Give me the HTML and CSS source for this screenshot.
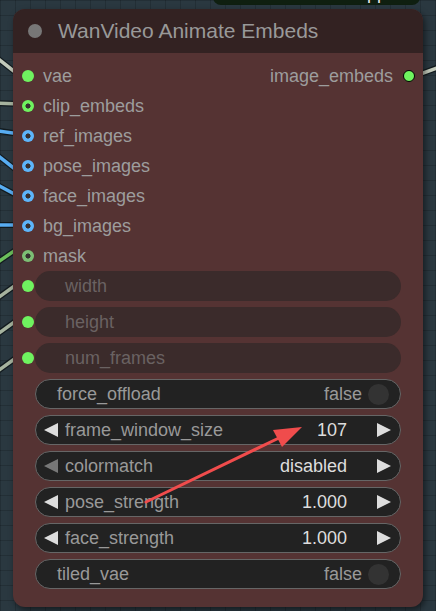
FILE: index.html
```html
<!DOCTYPE html>
<html>
<head>
<meta charset="utf-8">
<link rel="stylesheet" href="styles.css">
</head>
<body>
<div class="canvas">
  <svg class="wires" width="436" height="611" viewBox="0 0 436 611">
    <g class="wire-shadow">
      <path d="M-8 54 L20 76"/>
      <path d="M-8 103 L20 104"/>
      <path d="M-8 130 L20 134"/>
      <path d="M-8 151 L20 173"/>
      <path d="M-8 182 L20 197"/>
      <path d="M-8 225 L20 225"/>
      <path d="M-8 266 L20 247"/>
      <path d="M-8 302 L20 282"/>
      <path d="M-8 338 L20 318"/>
      <path d="M-8 375 L20 355"/>
      <path d="M415 76 L445 65"/>
    </g>
    <path class="wire w-light" d="M-8 54 L20 76"/>
    <path class="wire w-sage" d="M-8 103 L20 104"/>
    <path class="wire w-blue" d="M-8 130 L20 134"/>
    <path class="wire w-blue" d="M-8 151 L20 173"/>
    <path class="wire w-blue" d="M-8 182 L20 197"/>
    <path class="wire w-blue" d="M-8 225 L20 225"/>
    <path class="wire w-green" d="M-8 266 L20 247"/>
    <path class="wire w-sage" d="M-8 302 L20 282"/>
    <path class="wire w-sage" d="M-8 338 L20 318"/>
    <path class="wire w-sage" d="M-8 375 L20 355"/>
    <path class="wire w-light" d="M415 76 L445 65"/>
  </svg>

  <div class="topnode"><span class="topnode-text">App</span></div>

  <div class="node">
    <div class="title">
      <span class="collapse"></span>
      <span class="title-text">WanVideo Animate Embeds</span>
    </div>
    <div class="slots">
      <div class="slot-row">
        <div class="slot in"><span class="dot green"></span>vae</div>
        <div class="slot out">image_embeds<span class="dot green outdot"></span></div>
      </div>
      <div class="slot-row">
        <div class="slot in"><span class="dot ring-green"></span>clip_embeds</div>
      </div>
      <div class="slot-row">
        <div class="slot in"><span class="dot ring-blue"></span>ref_images</div>
      </div>
      <div class="slot-row">
        <div class="slot in"><span class="dot ring-blue"></span>pose_images</div>
      </div>
      <div class="slot-row">
        <div class="slot in"><span class="dot ring-blue"></span>face_images</div>
      </div>
      <div class="slot-row">
        <div class="slot in"><span class="dot ring-blue"></span>bg_images</div>
      </div>
      <div class="slot-row">
        <div class="slot in"><span class="dot ring-mask"></span>mask</div>
      </div>
    </div>
    <div class="widgets">
      <div class="wrow"><span class="sock dot green"></span><div class="pill input">width</div></div>
      <div class="wrow"><span class="sock dot green"></span><div class="pill input">height</div></div>
      <div class="wrow"><span class="sock dot green"></span><div class="pill input">num_frames</div></div>
      <div class="wrow"><span class="sock"></span>
        <div class="pill toggle"><span class="label">force_offload</span><span class="tval">false</span><span class="knob"></span></div>
      </div>
      <div class="wrow"><span class="sock"></span>
        <div class="pill number"><span class="arr left"></span><span class="label">frame_window_size</span><span class="val">107</span><span class="arr right"></span></div>
      </div>
      <div class="wrow"><span class="sock"></span>
        <div class="pill number"><span class="arr left dim"></span><span class="label">colormatch</span><span class="val">disabled</span><span class="arr right"></span></div>
      </div>
      <div class="wrow"><span class="sock"></span>
        <div class="pill number"><span class="arr left"></span><span class="label">pose_strength</span><span class="val">1.000</span><span class="arr right"></span></div>
      </div>
      <div class="wrow"><span class="sock"></span>
        <div class="pill number"><span class="arr left"></span><span class="label">face_strength</span><span class="val">1.000</span><span class="arr right"></span></div>
      </div>
      <div class="wrow"><span class="sock"></span>
        <div class="pill toggle"><span class="label">tiled_vae</span><span class="tval">false</span><span class="knob"></span></div>
      </div>
    </div>
  </div>

  <svg class="annot" width="436" height="611" viewBox="0 0 436 611">
    <line x1="146" y1="502" x2="281" y2="437" stroke="#f04c4c" stroke-width="3" stroke-linecap="round"/>
    <polygon points="302,427 273,430 282,447" fill="#f04c4c"/>
  </svg>
</div>
</body>
</html>
```

FILE: styles.css
```css
* { box-sizing: border-box; }

body {
  margin: 0;
  background: #29363e;
  font-family: "Liberation Sans", Arial, sans-serif;
}

.canvas {
  position: relative;
  width: 436px;
  height: 611px;
  overflow: hidden;
  background-color: #2a3840;
  background-image:
    linear-gradient(rgba(0, 0, 0, 0.16) 1px, transparent 1px),
    linear-gradient(90deg, rgba(0, 0, 0, 0.16) 1px, transparent 1px);
  background-size: 15px 15px;
}

.wires {
  position: absolute;
  left: 0;
  top: 0;
}

.wire-shadow path {
  fill: none;
  stroke: #121a1e;
  stroke-width: 6;
}

.wire {
  fill: none;
  stroke-width: 3.5;
}

.w-light { stroke: #c3cabb; }
.w-sage { stroke: #a6b39f; }
.w-blue { stroke: #58adf2; }
.w-green { stroke: #6cbf5c; }

.topnode {
  position: absolute;
  left: 213px;
  top: -40px;
  width: 207px;
  height: 45px;
  background: #0f1f10;
  border-radius: 0 0 8px 8px;
  display: flex;
  justify-content: flex-end;
  align-items: flex-end;
  padding: 0 33px 3px 0;
  overflow: hidden;
}

.topnode-text {
  color: #e8e8e8;
  font-size: 18px;
  line-height: 18px;
}

.node {
  position: absolute;
  left: 13px;
  top: 9px;
  width: 410px;
  height: 598px;
  background: #553333;
  border-radius: 12px;
  box-shadow: 2px 3px 6px rgba(0, 0, 0, 0.5);
  display: flex;
  flex-direction: column;
}

.title {
  height: 44px;
  background: #332222;
  border-radius: 12px 12px 0 0;
  display: flex;
  align-items: center;
  padding-left: 15px;
  gap: 16px;
}

.collapse {
  width: 14px;
  height: 14px;
  border-radius: 50%;
  background: #777;
  flex: none;
}

.title-text {
  color: #999;
  font-size: 21px;
}

.slots {
  padding-top: 8px;
  display: flex;
  flex-direction: column;
}

.slot-row {
  height: 30px;
  display: flex;
  align-items: center;
  justify-content: space-between;
}

.slot {
  display: flex;
  align-items: center;
  gap: 9px;
  font-size: 18px;
  color: #9d9d9d;
}

.slot.in { padding-left: 9px; }
.slot.out { padding-right: 8px; gap: 10px; }

.dot {
  width: 12px;
  height: 12px;
  border-radius: 50%;
  flex: none;
}

.dot.green { background: #6ff35f; }
.dot.ring-green { background: radial-gradient(circle, #353030 0 2.3px, #6ff35f 2.8px); }
.dot.ring-blue { background: radial-gradient(circle, #353030 0 2.3px, #5db5fb 2.8px); }
.dot.ring-mask { background: radial-gradient(circle, #353030 0 2.3px, #7cbf74 2.8px); }
.dot.outdot { border: 1px solid #000; }

.widgets {
  margin-top: 0;
  display: flex;
  flex-direction: column;
  gap: 6px;
}

.wrow {
  height: 30px;
  display: flex;
  align-items: center;
  padding: 0 22px 0 9px;
}

.sock {
  width: 12px;
  height: 12px;
  margin-right: 1px;
  flex: none;
}

.pill {
  flex: 1;
  height: 30px;
  border-radius: 15px;
  display: flex;
  align-items: center;
  font-size: 18px;
}

.pill.input {
  background: #3b2b2b;
  color: #6a6262;
  padding-left: 30px;
}

.pill.toggle {
  background: #222;
  border: 1px solid #666;
  padding: 0 11px 0 21px;
  color: #999;
}

.pill.number {
  background: #222;
  border: 1px solid #666;
  padding: 0 9px 0 8px;
  color: #999;
}

.label { flex: 1; }

.tval { color: #999; }

.knob {
  width: 21px;
  height: 21px;
  border-radius: 50%;
  background: #333;
  margin-left: 6px;
}

.val {
  color: #ddd;
}

.arr {
  width: 0;
  height: 0;
  border-top: 7px solid transparent;
  border-bottom: 7px solid transparent;
  flex: none;
}

.arr.left {
  border-right: 14px solid #ddd;
  margin-right: 7px;
}

.arr.left.dim { border-right-color: #777; }

.arr.right {
  border-left: 14px solid #ddd;
  margin-left: 30px;
}

.annot {
  position: absolute;
  left: 0;
  top: 0;
  pointer-events: none;
}
```
